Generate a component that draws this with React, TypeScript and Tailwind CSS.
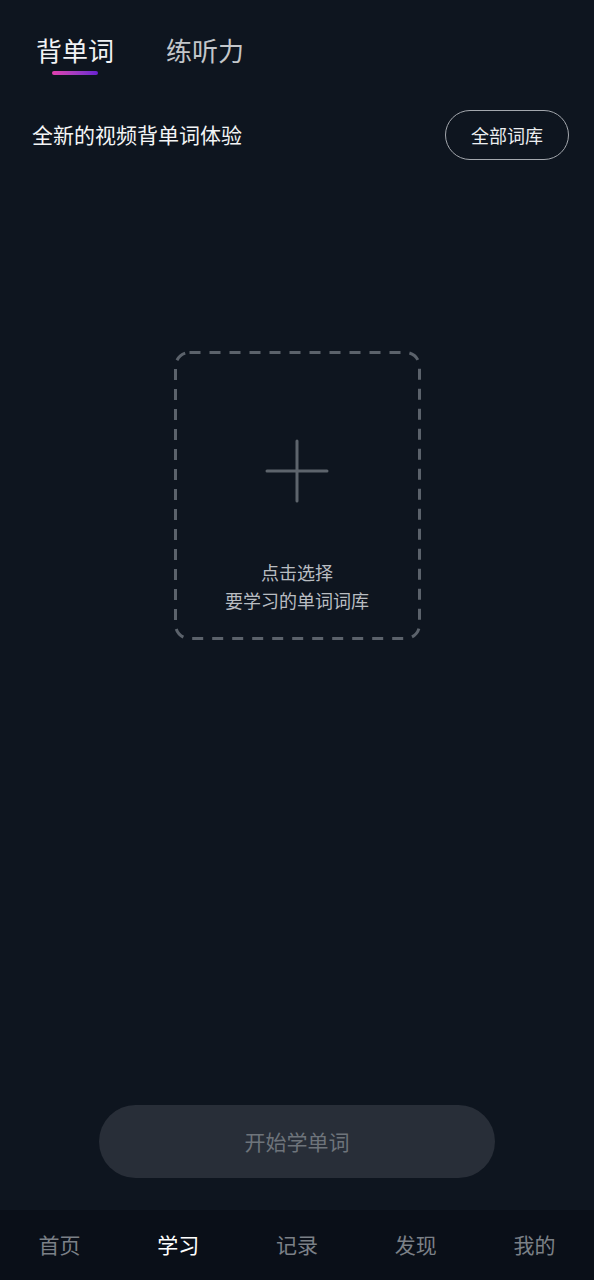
const font = { fontFamily: '"Noto Sans CJK SC", "Noto Sans", sans-serif' };

const navItems = ["首页", "学习", "记录", "发现", "我的"];

export default function App() {
  return (
    <div
      className="flex h-[1280px] w-[594px] flex-col bg-[#0e151f] text-white"
      style={font}
    >
      {/* top tabs */}
      <div className="flex items-start gap-[52px] pl-[36px] pt-[30px]">
        <div className="flex flex-col items-center">
          <span className="text-[26px] leading-[40px] text-[#f2f3f5]">背单词</span>
          <span className="mt-[1px] h-[4px] w-[46px] rounded-full bg-gradient-to-r from-[#e23fae] to-[#6a1fd0]" />
        </div>
        <span className="text-[26px] leading-[40px] text-[#c3c6ca]">练听力</span>
      </div>

      {/* subtitle row */}
      <div className="mt-[35px] flex items-center justify-between pl-[32px] pr-[25px]">
        <span className="text-[21px] text-[#f4f5f6]">全新的视频背单词体验</span>
        <button className="flex h-[50px] w-[124px] items-center justify-center rounded-full border-[1.5px] border-[#a3a7ad] text-[18px] text-[#eceef0]">
          全部词库
        </button>
      </div>

      {/* picker */}
      <div className="mt-[191px] flex justify-center">
        <div className="relative flex h-[289px] w-[247px] flex-col items-center">
          <svg
            className="absolute inset-0"
            width="247"
            height="289"
            viewBox="0 0 247 289"
          >
            <rect
              x="1.5"
              y="1.5"
              width="244"
              height="286"
              rx="14"
              fill="none"
              stroke="#5b626b"
              strokeWidth="3"
              strokeDasharray="11 9"
            />
          </svg>
          <svg className="mt-[88px]" width="64" height="64" viewBox="0 0 64 64">
            <path
              d="M32 2v60M2 32h60"
              stroke="#5d646c"
              strokeWidth="3"
              strokeLinecap="round"
            />
          </svg>
          <div className="mt-[55px] flex flex-col items-center text-[18px] leading-[28px] text-[#b9bdc2]">
            <span>点击选择</span>
            <span>要学习的单词词库</span>
          </div>
        </div>
      </div>

      <div className="flex-1" />

      {/* start button */}
      <div className="flex justify-center pb-[32px]">
        <button className="flex h-[73px] w-[396px] items-center justify-center rounded-full bg-[#282e38] text-[21px] text-[#6e747b]">
          开始学单词
        </button>
      </div>

      {/* bottom nav */}
      <div className="grid h-[70px] grid-cols-5 items-center bg-[#0a0f18]">
        {navItems.map((label) => (
          <span
            key={label}
            className={
              label === "学习"
                ? "text-center text-[21px] text-white"
                : "text-center text-[21px] text-[#7b8087]"
            }
          >
            {label}
          </span>
        ))}
      </div>
    </div>
  );
}
